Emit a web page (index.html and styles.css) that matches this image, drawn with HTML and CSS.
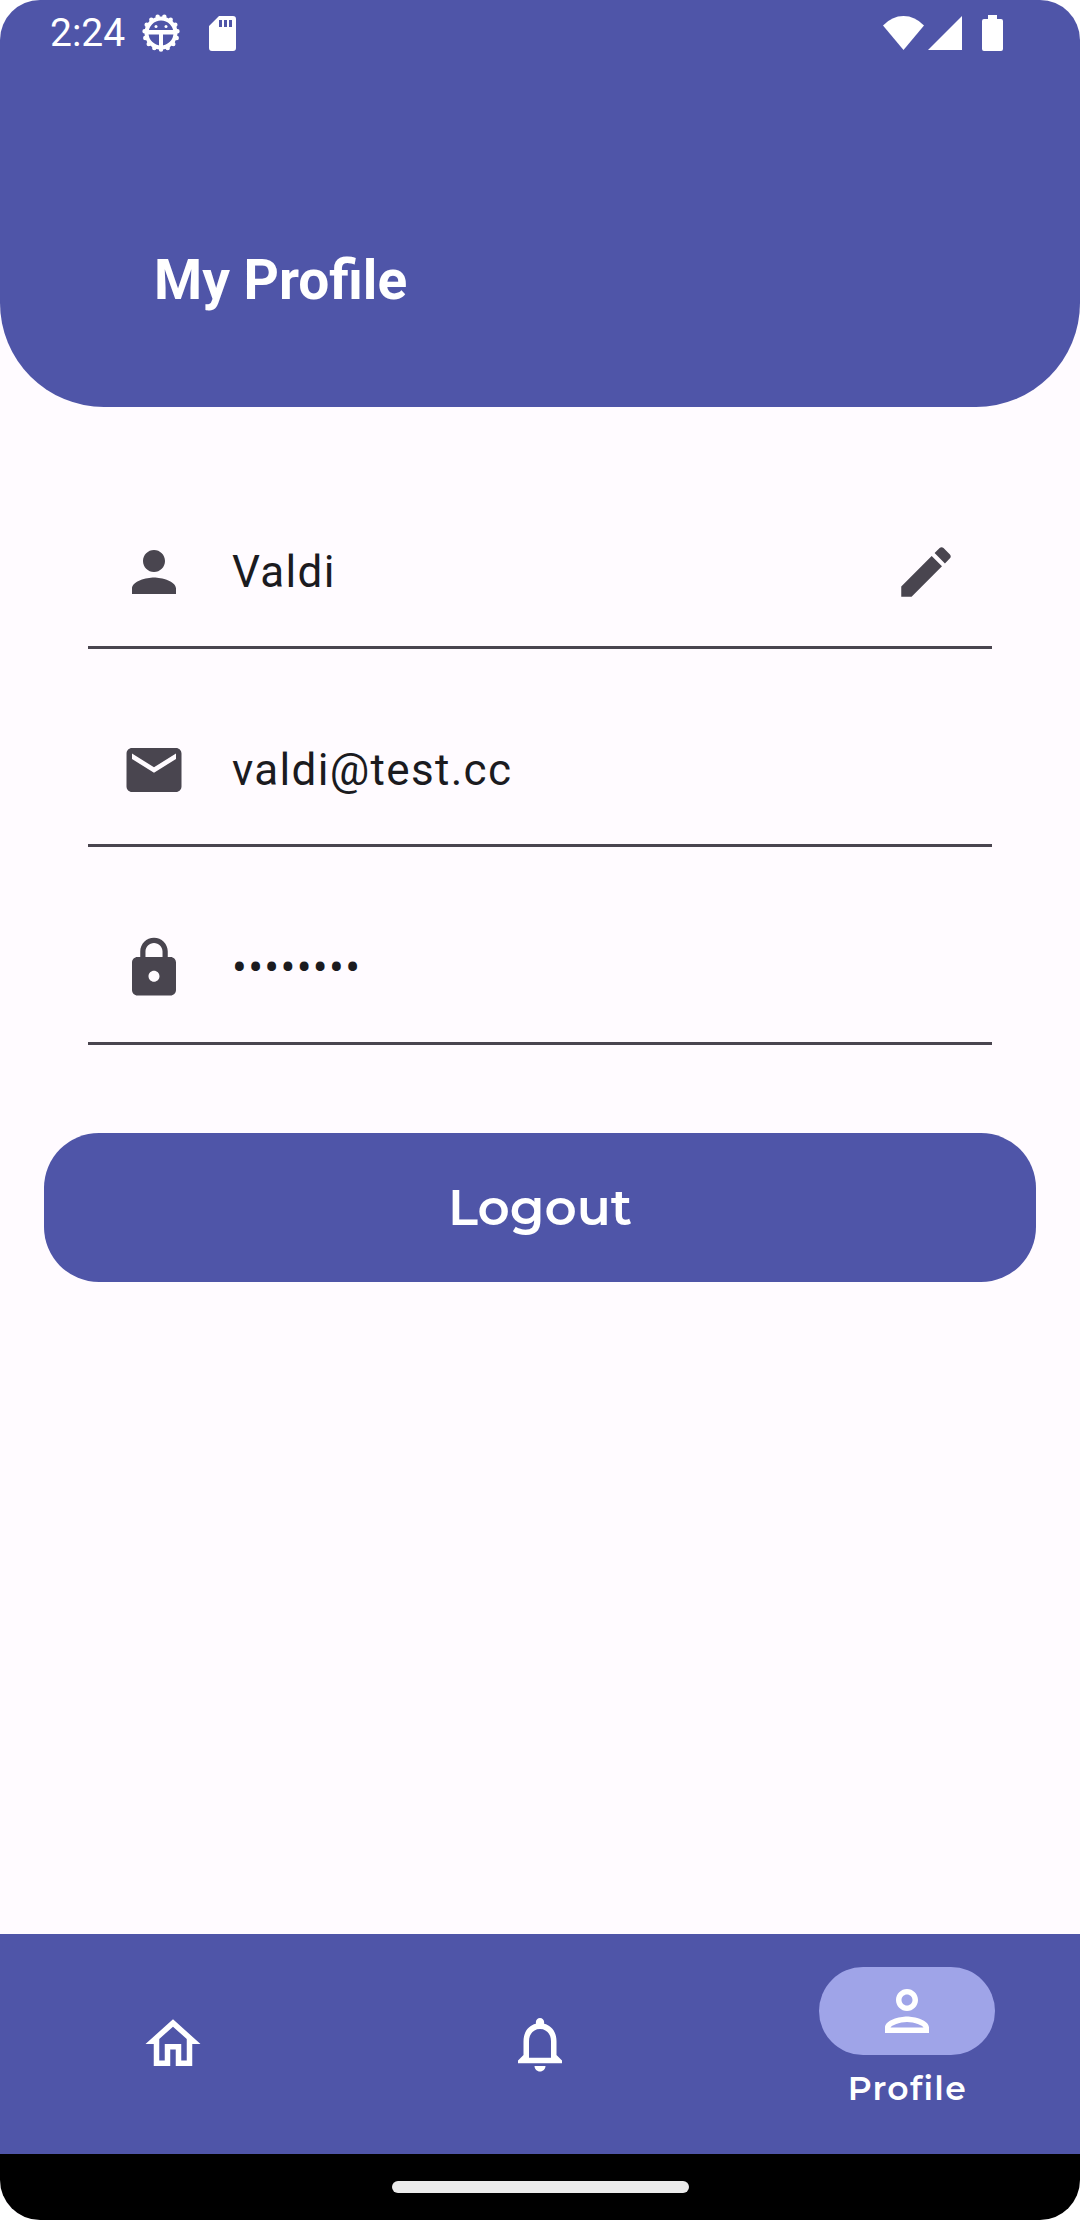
FILE: index.html
```html
<!DOCTYPE html>
<html lang="en">
<head>
<meta charset="utf-8">
<meta name="viewport" content="width=device-width, initial-scale=1">
<title>My Profile</title>
<link rel="stylesheet" href="styles.css">
</head>
<body>
<div class="screen">
  <header class="header">
    <div class="status">
      <div class="status-group">
        <time class="clock">2:24</time>
        <svg class="gear" viewBox="0 0 38 38" aria-hidden="true">
          <circle cx="19" cy="19" r="16.500" fill="none" stroke="#fff" stroke-width="4.500" stroke-linecap="round" pathLength="15" stroke-dasharray="0 1" stroke-dashoffset="-.75"/>
          <circle cx="19" cy="19" r="14.500" fill="none" stroke="#fff" stroke-width="4"/>
          <path d="M6 16h26v4.500H21v12h-4v-12H6z" fill="#fff"/>
          <circle cx="14" cy="12.500" r="1.500" fill="#fff"/><circle cx="24" cy="12.500" r="1.500" fill="#fff"/>
        </svg>
        <svg class="sd" viewBox="0 0 27 35" aria-hidden="true">
          <path fill="#fff" fill-rule="evenodd" d="M10 0h14a3 3 0 0 1 3 3v29a3 3 0 0 1-3 3H3a3 3 0 0 1-3-3V10zM10 4v7h3V4zm5 0v7h3V4zm5 0v7h3V4z"/>
        </svg>
      </div>
      <div class="status-group status-right">
        <svg class="wifi" viewBox="0 0 41 34" aria-hidden="true"><path fill="#fff" d="M0 9.500Q9 0 20.500 0T41 9.500L20.500 34z"/></svg>
        <svg class="signal" viewBox="0 0 34 34" aria-hidden="true"><path fill="#fff" d="M34 0v34H0z"/></svg>
        <svg class="battery" viewBox="0 0 21 36" aria-hidden="true"><path fill="#fff" d="M6 0h9v4h4a2 2 0 0 1 2 2v28a2 2 0 0 1-2 2H2a2 2 0 0 1-2-2V6a2 2 0 0 1 2-2h4z"/></svg>
      </div>
    </div>
    <h1 class="title">My Profile</h1>
  </header>

  <main class="main">
    <form class="form">
      <div class="field">
        <label class="lead" for="name" aria-label="Name"><svg class="icon" viewBox="0 0 24 24"><path d="M12 12c2.210 0 4-1.790 4-4s-1.790-4-4-4-4 1.790-4 4 1.790 4 4 4zm0 2c-2.670 0-8 1.340-8 4v2h16v-2c0-2.660-5.330-4-8-4z"/></svg></label>
        <input class="input" id="name" type="text" value="Valdi">
        <button class="edit" type="button" aria-label="Edit name"><svg class="icon" viewBox="0 0 24 24"><path d="M3 17.250V21h3.750L17.810 9.940l-3.750-3.750L3 17.250zM20.710 7.040c.39-.39.39-1.020 0-1.410l-2.340-2.340c-.39-.39-1.020-.39-1.410 0l-1.830 1.830 3.750 3.750 1.830-1.830z"/></svg></button>
      </div>
      <div class="field">
        <label class="lead" for="email" aria-label="Email"><svg class="icon" viewBox="0 0 24 24"><path d="M20 4H4c-1.100 0-1.990.9-1.990 2L2 18c0 1.100.9 2 2 2h16c1.100 0 2-.9 2-2V6c0-1.100-.9-2-2-2zm0 4l-8 5-8-5V6l8 5 8-5v2z"/></svg></label>
        <input class="input" id="email" type="email" value="valdi@test.cc">
      </div>
      <div class="field">
        <label class="lead" for="password" aria-label="Password"><svg class="icon" viewBox="0 0 24 24"><path d="M18 8h-1V6c0-2.760-2.240-5-5-5S7 3.240 7 6v2H6c-1.100 0-2 .9-2 2v10c0 1.100.9 2 2 2h12c1.100 0 2-.9 2-2V10c0-1.100-.9-2-2-2zm-6 9c-1.100 0-2-.9-2-2s.9-2 2-2 2 .9 2 2-.9 2-2 2zm3.100-9H8.900V6c0-1.710 1.390-3.100 3.100-3.100 1.710 0 3.100 1.390 3.100 3.100v2z"/></svg></label>
        <input class="input" id="password" type="password" value="password">
      </div>
    </form>
    <button class="logout" type="button">Logout</button>
  </main>

  <nav class="nav">
    <a class="nav-item" href="#home" aria-label="Home"><svg class="icon" viewBox="0 0 24 24"><path d="M12 5.690l5 4.500V18h-2v-6H9v6H7v-7.810l5-4.500M12 3L2 12h3v8h6v-6h2v6h6v-8h3L12 3z"/></svg></a>
    <a class="nav-item" href="#notifications" aria-label="Notifications"><svg class="icon" viewBox="0 0 24 24"><path d="M12 22c1.100 0 2-.9 2-2h-4c0 1.100.9 2 2 2zm6-6v-5c0-3.070-1.630-5.640-4.500-6.320V4c0-.83-.67-1.500-1.500-1.500s-1.500.67-1.500 1.500v.68C7.640 5.360 6 7.920 6 11v5l-2 2v1h16v-1l-2-2zm-2 1H8v-6c0-2.480 1.510-4.500 4-4.500s4 2.020 4 4.500v6z"/></svg></a>
    <a class="nav-item nav-item-active" href="#profile" aria-current="page">
      <span class="pill"><svg class="icon" viewBox="0 0 24 24"><path d="M12 6c1.100 0 2 .9 2 2s-.9 2-2 2-2-.9-2-2 .9-2 2-2m0 10c2.700 0 5.800 1.290 6 2H6c.23-.72 3.310-2 6-2m0-12C9.790 4 8 5.790 8 8s1.790 4 4 4 4-1.790 4-4-1.790-4-4-4zm0 10c-2.670 0-8 1.340-8 4v2h16v-2c0-2.660-5.330-4-8-4z"/></svg></span>
      <span class="nav-label">Profile</span>
    </a>
  </nav>
  <div class="gesture"><div class="handle"></div></div>
</div>
</body>
</html>
```
FILE: styles.css
```css
:root {
  --primary: #4f55a8;
  --surface: #fffbff;
  --ink: #1b1b1f;
  --muted: #49454f;
}

* { box-sizing: border-box; }

body {
  margin: 0;
  background: #fff;
  font-family: Roboto, sans-serif;
}

.screen {
  display: flex;
  flex-direction: column;
  min-height: 100vh;
  overflow: hidden;
  border-radius: 40px;
  background: var(--surface);
}

.header {
  padding-bottom: 95px;
  border-radius: 0 0 104px 104px;
  background: var(--primary);
  color: #fff;
}

.status {
  display: flex;
  justify-content: space-between;
  align-items: center;
  height: 66px;
  padding: 0 77px 0 50px;
}

.status-group {
  display: flex;
  align-items: center;
}

.clock {
  font-size: 39px;
  line-height: 44px;
}

.gear { width: 38px; height: 38px; margin-left: 17px; }
.sd { width: 27px; height: 35px; margin-left: 29px; }
.wifi { width: 41px; height: 34px; }
.signal { width: 34px; height: 34px; margin-left: 4px; }
.battery { width: 21px; height: 36px; margin-left: 20px; }

.title {
  margin: 182px 154px 0;
  font-size: 55px;
  font-weight: 700;
  line-height: 64px;
}

.main {
  flex: 1;
  display: flex;
  flex-direction: column;
  gap: 88px;
  padding: 88px 44px;
}

.form {
  display: flex;
  flex-direction: column;
  gap: 44px;
  padding: 0 44px;
}

.field {
  display: flex;
  height: 154px;
  border-bottom: 3px solid var(--muted);
  color: var(--muted);
}

.icon {
  width: 66px;
  height: 66px;
  fill: currentColor;
}

.lead,
.edit {
  display: flex;
  flex: none;
  align-items: center;
  justify-content: center;
  width: 132px;
  height: 154px;
  padding: 0;
  border: 0;
  background: none;
  color: inherit;
}

.input {
  flex: 1;
  min-width: 0;
  height: 154px;
  padding: 0 12px;
  border: 0;
  outline: 0;
  background: none;
  color: var(--ink);
  font: 400 44px/66px Roboto, sans-serif;
  letter-spacing: 0.03em;
}

.logout {
  padding: 41px 44px;
  border: 0;
  border-radius: 55px;
  background: var(--primary);
  color: #fff;
  font: 600 50px/67px Montserrat, Inter, sans-serif;
}

.nav {
  display: grid;
  grid-template-columns: repeat(3, 1fr);
  gap: 22px;
  height: 220px;
  background: var(--primary);
}

.nav-item {
  display: flex;
  flex-direction: column;
  align-items: center;
  justify-content: center;
  gap: 11px;
  color: #fff;
  text-decoration: none;
}

.nav-item-active {
  justify-content: flex-start;
  padding-top: 33px;
}

.pill {
  display: flex;
  align-items: center;
  justify-content: center;
  width: 176px;
  height: 88px;
  border-radius: 44px;
  background: #9fa4e8;
}

.nav-label {
  font: 600 33px/44px Montserrat, Inter, sans-serif;
  letter-spacing: 0.04em;
}

.gesture {
  display: flex;
  align-items: center;
  justify-content: center;
  height: 66px;
  background: #000;
}

.handle {
  width: 297px;
  height: 12px;
  border-radius: 6px;
  background: #ebebeb;
}
```
